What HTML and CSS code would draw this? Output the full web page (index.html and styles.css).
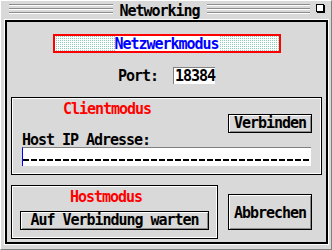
FILE: index.html
```html
<!DOCTYPE html>
<html lang="de">
<head>
    <meta charset="UTF-8">
    <title>Networking</title>
    <link rel="stylesheet" href="styles.css">
</head>
<body>
    <div class="window">
        <div class="titlebar">
            <div class="stripes"></div>
            <div class="title">Networking</div>
            <div class="stripes"></div>
            <div class="closebox"></div>
        </div>

        <div class="frame">
            <div class="mode-box">
                <span class="dots"></span>
                <span class="mode-label">Netzwerkmodus</span>
                <span class="dots"></span>
            </div>

            <div class="port-row">
                <span class="label">Port:</span>
                <span class="port-input">18384</span>
            </div>

            <div class="group client">
                <div class="client-top">
                    <span class="group-title">Clientmodus</span>
                    <button class="btn btn-small">Verbinden</button>
                </div>
                <div class="label host-label">Host IP Adresse:</div>
                <div class="ip-field"></div>
            </div>

            <div class="bottom-row">
                <div class="group host">
                    <div class="group-title">Hostmodus</div>
                    <button class="btn btn-wide">Auf Verbindung warten</button>
                </div>
                <button class="btn btn-cancel">Abbrechen</button>
            </div>
        </div>
    </div>
</body>
</html>
```

FILE: styles.css
```css
* {
    box-sizing: border-box;
}

body {
    margin: 0;
    background-color: #d9d9d9;
    font-family: "DejaVu Sans Mono", monospace;
    font-weight: bold;
    font-size: 15px;
    letter-spacing: -1.03px;
    line-height: 13px;
    color: #000;
}

.window {
    width: 332px;
    height: 250px;
    background-color: #d9d9d9;
    border-top: 1px solid #fff;
    border-left: 1px solid #fff;
    border-right: 1px solid #808080;
    border-bottom: 1px solid #808080;
}

/* title bar */
.titlebar {
    display: flex;
    align-items: flex-start;
    height: 18px;
    padding: 0 7px 0 8px;
}

.stripes {
    flex: 1;
    height: 10px;
    margin-top: 3px;
    background: repeating-linear-gradient(#8c8c8c 0 1px, #fff 1px 2px, transparent 2px 4px);
}

.title {
    margin: 4px 7px 0;
}

.closebox {
    width: 8px;
    height: 8px;
    margin: 3px 0 0 6px;
    border: 1px solid #000;
    background-color: #fff;
    box-shadow: 1px 1px 0 #000;
}

/* main frame */
.frame {
    height: 224px;
    margin: 1px 3px 0 4px;
    padding: 0 4px;
    border: 2px solid #000;
    box-shadow: 0 0 0 1px #fff;
}

.mode-box {
    display: flex;
    width: 228px;
    height: 19px;
    margin: 12px auto 0;
    border: 2px solid #f00;
}

.dots {
    flex: 1;
    background: conic-gradient(#8ccbb8 25%, #fff 0) 0 0 / 2px 2px;
}

.mode-label {
    padding-top: 1px;
    line-height: 14px;
    color: #00f;
    background-color: #fff;
}

.port-row {
    display: flex;
    justify-content: center;
    align-items: flex-start;
    height: 17px;
    margin-top: 14px;
}

.port-row .label {
    margin-top: 3px;
}

.port-input {
    width: 42px;
    height: 17px;
    margin-left: 15px;
    padding-left: 1px;
    line-height: 17px;
    background-color: #fff;
    border-top: 1px solid #808080;
    border-left: 1px solid #808080;
}

/* group boxes */
.group {
    border: 1px solid #000;
    box-shadow: inset 0 0 0 1px #fff;
}

.group-title {
    color: #f00;
}

.client {
    height: 78px;
    margin-top: 13px;
    padding: 5px 9px 0 10px;
}

.client-top {
    display: flex;
    justify-content: space-between;
    align-items: flex-start;
    height: 30px;
}

.client .group-title {
    margin-left: 41px;
}

.host-label {
    margin-top: 1px;
}

.ip-field {
    height: 19px;
    margin-right: 1px;
    border-top: 1px solid #808080;
    border-left: 1px solid #00f;
    background: repeating-linear-gradient(90deg, #000 0 6px, transparent 6px 8px) 0 11px / 100% 2px no-repeat, #fff;
}

.bottom-row {
    display: flex;
    align-items: center;
    margin-top: 10px;
}

.host {
    width: 207px;
    height: 54px;
    padding: 5px 8px 0;
}

.host .group-title {
    margin-left: 50px;
}

/* buttons */
.btn {
    padding: 0;
    font: inherit;
    letter-spacing: inherit;
    color: #000;
    text-align: center;
    background-color: #d9d9d9;
    border: 1px solid #000;
    box-shadow: inset 1px 1px 0 #fff, inset -1px -1px 0 #8c8c8c;
}

.btn-small {
    width: 84px;
    height: 19px;
    margin-top: 11px;
    line-height: 17px;
}

.btn-wide {
    width: 189px;
    height: 19px;
    margin-top: 7px;
    line-height: 17px;
}

.btn-cancel {
    width: 84px;
    height: 36px;
    margin-left: 10px;
    padding-top: 2px;
    line-height: 32px;
}
```
